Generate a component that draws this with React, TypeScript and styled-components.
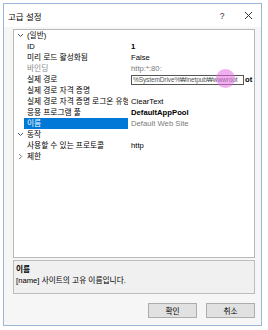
import React from "react";
import styled, { createGlobalStyle } from "styled-components";

type Row =
    | { kind: "category"; label: string; open: boolean }
    | {
          kind: "prop";
          label: string;
          value?: string;
          bold?: boolean;
          muted?: boolean;
          valueMuted?: boolean;
          selected?: boolean;
          editor?: string;
      };

const rows: Row[] = [
    { kind: "category", label: "(일반)", open: true },
    { kind: "prop", label: "ID", value: "1", bold: true },
    { kind: "prop", label: "미리 로드 활성화됨", value: "False" },
    { kind: "prop", label: "바인딩", value: "http:*:80:", muted: true, valueMuted: true },
    { kind: "prop", label: "실제 경로", editor: "%SystemDrive%₩inetpub₩wwwroot" },
    { kind: "prop", label: "실제 경로 자격 증명" },
    { kind: "prop", label: "실제 경로 자격 증명 로그온 유형", value: "ClearText" },
    { kind: "prop", label: "응용 프로그램 풀", value: "DefaultAppPool", bold: true },
    { kind: "prop", label: "이름", value: "Default Web Site", selected: true, valueMuted: true },
    { kind: "category", label: "동작", open: true },
    { kind: "prop", label: "사용할 수 있는 프로토콜", value: "http" },
    { kind: "category", label: "제한", open: false },
];

function Chevron({ open }: { open: boolean }) {
    return (
        <svg width="7" height="7" viewBox="0 0 7 7">
            {open ? (
                <path d="M1 2 L3.5 4.5 L6 2" fill="none" stroke="#555" strokeWidth="1" />
            ) : (
                <path d="M2.2 1 L4.7 3.5 L2.2 6" fill="none" stroke="#777" strokeWidth="1" />
            )}
        </svg>
    );
}

export default function App() {
    return (
        <>
            <GlobalStyle />
            <Frame>
                <Dialog>
                    <TitleBar>
                        <Title>고급 설정</Title>
                        <Help>?</Help>
                        <Close>
                            <svg width="9" height="9" viewBox="0 0 9 9">
                                <path d="M1 1 L8 8 M8 1 L1 8" stroke="#333" strokeWidth="1" />
                            </svg>
                        </Close>
                    </TitleBar>
                    <Body>
                        <Grid>
                            {rows.map((row) =>
                                row.kind === "category" ? (
                                    <GridRow key={row.label}>
                                        <Gutter>
                                            <Chevron open={row.open} />
                                        </Gutter>
                                        <CategoryLabel>{row.label}</CategoryLabel>
                                    </GridRow>
                                ) : (
                                    <GridRow key={row.label}>
                                        <Gutter />
                                        <NameCell $selected={row.selected} $muted={row.muted}>
                                            {row.label}
                                        </NameCell>
                                        <ValueCell $bold={row.bold} $muted={row.valueMuted}>
                                            {row.editor ? (
                                                <>
                                                    <Editor>{row.editor}</Editor>
                                                    <Overflow>ot</Overflow>
                                                </>
                                            ) : (
                                                row.value
                                            )}
                                        </ValueCell>
                                    </GridRow>
                                )
                            )}
                        </Grid>
                        <Description>
                            <DescTitle>이름</DescTitle>
                            <DescText>[name] 사이트의 고유 이름입니다.</DescText>
                        </Description>
                        <Buttons>
                            <Button>확인</Button>
                            <Button>취소</Button>
                        </Buttons>
                    </Body>
                    <CursorSpot />
                </Dialog>
            </Frame>
        </>
    );
}

const GlobalStyle = createGlobalStyle`
    html, body {
        margin: 0;
        padding: 0;
        background: #ffffff;
    }
    body {
        font-family: "Liberation Sans", "Noto Sans CJK KR", sans-serif;
        font-size: 7.7px;
        color: #000;
    }
`;

const Frame = styled.div`
    width: 268px;
    height: 330px;
    padding: 3px 0 0 3px;
    box-sizing: border-box;
`;

const Dialog = styled.div`
    position: relative;
    width: 259px;
    height: 323px;
    box-sizing: border-box;
    border: 1px solid #9bb6d8;
    background: #f6f6f6;
    display: flex;
    flex-direction: column;
`;

const TitleBar = styled.div`
    height: 23px;
    background: #ffffff;
    display: flex;
    align-items: center;
    padding-left: 4px;
    font-size: 8.5px;
`;

const Title = styled.div`
    flex: 1;
`;

const Help = styled.div`
    width: 26px;
    text-align: center;
    color: #333;
`;

const Close = styled.div`
    width: 26px;
    display: flex;
    justify-content: center;
`;

const Body = styled.div`
    flex: 1;
    display: flex;
    flex-direction: column;
    padding: 2px 6px 0 9px;
`;

const Grid = styled.div`
    height: 229px;
    box-sizing: border-box;
    border: 1px solid #b9b9b9;
    background: #ffffff;
    display: flex;
    flex-direction: column;
    overflow: hidden;
`;

const GridRow = styled.div`
    height: 11px;
    display: grid;
    grid-template-columns: 10px 104px 1fr;
    align-items: stretch;
    line-height: 11px;
    white-space: nowrap;
`;

const Gutter = styled.div`
    display: flex;
    align-items: center;
    justify-content: center;
    padding-left: 2px;
`;

const CategoryLabel = styled.div`
    grid-column: 2 / 4;
    padding-left: 3px;
`;

const NameCell = styled.div<{ $selected?: boolean; $muted?: boolean }>`
    padding-left: 3px;
    overflow: hidden;
    background: ${(p) => (p.$selected ? "#0078d7" : "transparent")};
    color: ${(p) => (p.$selected ? "#ffffff" : p.$muted ? "#8a8a8a" : "#000")};
`;

const ValueCell = styled.div<{ $bold?: boolean; $muted?: boolean }>`
    padding-left: 3px;
    display: flex;
    align-items: center;
    overflow: hidden;
    font-weight: ${(p) => (p.$bold ? 700 : 400)};
    color: ${(p) => (p.$muted ? "#7a7a7a" : "#000")};
`;

const Editor = styled.div`
    flex: none;
    width: 113px;
    height: 10px;
    box-sizing: border-box;
    border: 1px solid #555;
    background: #fff;
    color: #555;
    font-size: 6.5px;
    letter-spacing: -0.1px;
    line-height: 8px;
    padding-left: 1px;
    overflow: hidden;
`;

const Overflow = styled.span`
    margin-left: 1px;
    font-weight: 700;
`;

const Description = styled.div`
    margin-top: 2px;
    height: 34px;
    box-sizing: border-box;
    border: 1px solid #bdbdbd;
    background: #f0f0f0;
    padding: 3px 2px;
    line-height: 11px;
`;

const DescTitle = styled.div`
    font-weight: 700;
`;

const DescText = styled.div``;

const Buttons = styled.div`
    margin-top: 9px;
    display: flex;
    justify-content: flex-end;
    gap: 9px;
`;

const Button = styled.div`
    width: 49px;
    height: 15px;
    box-sizing: border-box;
    border: 1px solid #adadad;
    background: #e1e1e1;
    display: flex;
    align-items: center;
    justify-content: center;
`;

const CursorSpot = styled.div`
    position: absolute;
    left: 212px;
    top: 65px;
    width: 19px;
    height: 19px;
    border-radius: 50%;
    background: rgba(230, 110, 225, 0.55);
    pointer-events: none;
`;
